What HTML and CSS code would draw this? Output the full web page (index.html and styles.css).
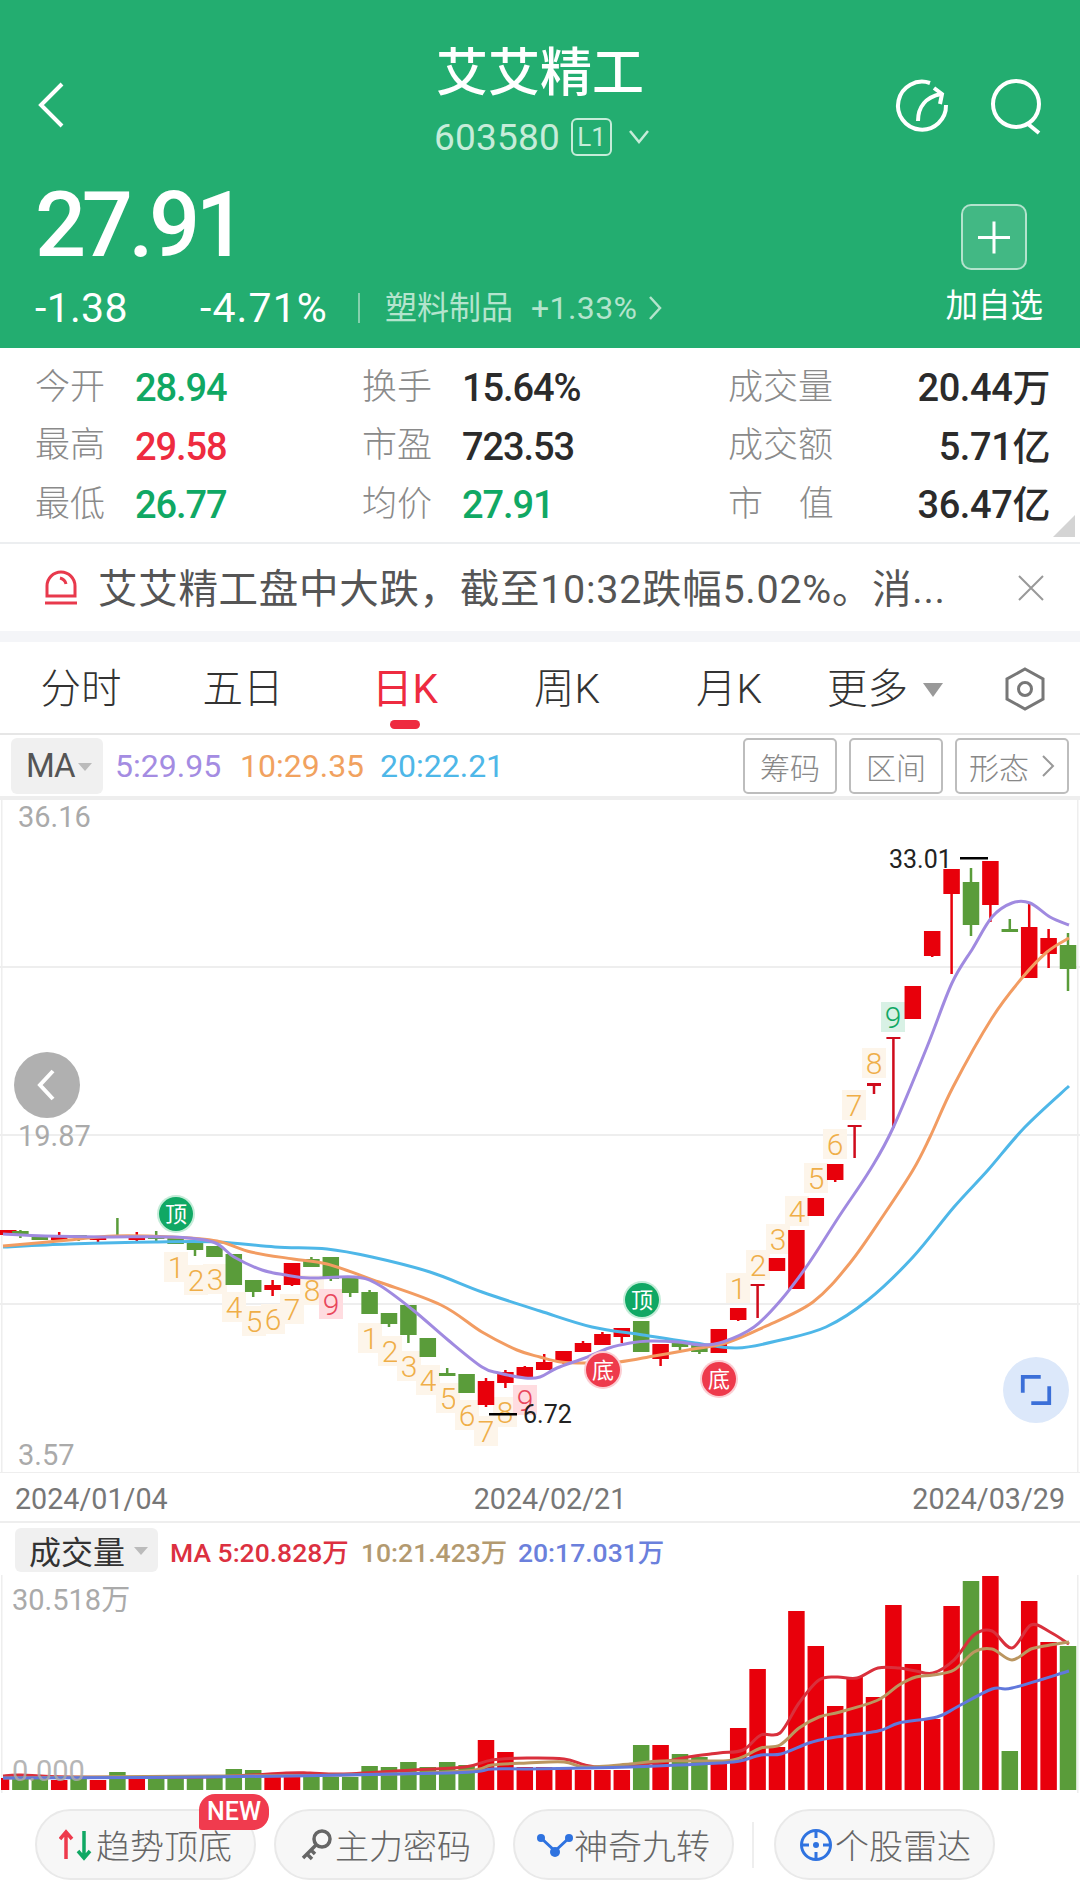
FILE: index.html
```html
<!DOCTYPE html>
<html lang="zh-CN">

<head>
    <meta charset="UTF-8">
    <meta name="viewport" content="width=device-width, initial-scale=1.0">
    <title>艾艾精工</title>
    <link rel="stylesheet" href="styles.css">
</head>

<body>
    <header class="header">
        <div class="nav">
            <svg class="nav-back" width="30" height="48" viewBox="0 0 30 48">
                <path d="M26 3 L5 24 L26 45" />
            </svg>
            <div class="nav-title">
                <h1 class="stock-name">艾艾精工</h1>
                <div class="stock-code">
                    <span>603580</span>
                    <span class="level-tag">L1</span>
                    <svg class="code-caret" width="22" height="16" viewBox="0 0 22 16">
                        <path d="M2 2 L11 13 L20 2" />
                    </svg>
                </div>
            </div>
            <div class="nav-icons">
                <svg width="56" height="56" viewBox="0 0 56 56">
                    <path d="M36 6 A24 24 0 1 0 52 28" />
                    <path d="M24 44 C24 30 32 20 47 17" />
                    <path d="M40 11 L48 17 L46 27" />
                </svg>
                <svg width="56" height="56" viewBox="0 0 56 56">
                    <circle cx="27" cy="27" r="23" />
                    <path d="M39 47 L50 56" />
                </svg>
            </div>
        </div>
        <div class="quote">
            <div>
                <div class="price">27.91</div>
                <div class="change">
                    <span class="change-abs">-1.38</span>
                    <span class="change-pct">-4.71%</span>
                    <span class="sector">
                        <span class="sector-name">塑料制品</span>
                        <span class="sector-pct">+1.33%</span>
                        <svg width="16" height="26" viewBox="0 0 16 26">
                            <path d="M3 2 L13 13 L3 24" />
                        </svg>
                    </span>
                </div>
            </div>
            <div class="watch">
                <div class="watch-box"></div>
                <div class="watch-label">加自选</div>
            </div>
        </div>
    </header>

    <section class="stats">
        <div class="stat-col stat-col-1">
            <div class="stat"><span class="stat-label">今开</span><span class="stat-val green">28.94</span></div>
            <div class="stat"><span class="stat-label">最高</span><span class="stat-val red">29.58</span></div>
            <div class="stat"><span class="stat-label">最低</span><span class="stat-val green">26.77</span></div>
        </div>
        <div class="stat-col stat-col-2">
            <div class="stat"><span class="stat-label">换手</span><span class="stat-val">15.64%</span></div>
            <div class="stat"><span class="stat-label">市盈</span><span class="stat-val">723.53</span></div>
            <div class="stat"><span class="stat-label">均价</span><span class="stat-val green">27.91</span></div>
        </div>
        <div class="stat-col stat-col-3">
            <div class="stat"><span class="stat-label">成交量</span><span class="stat-val">20.44万</span></div>
            <div class="stat"><span class="stat-label">成交额</span><span class="stat-val">5.71亿</span></div>
            <div class="stat"><span class="stat-label">市&emsp;值</span><span class="stat-val">36.47亿</span></div>
        </div>
        <span class="stats-corner"></span>
    </section>

    <section class="alert">
        <svg width="36" height="38" viewBox="0 0 36 38">
            <path class="alert-line" d="M4 27 V17 A14 14 0 0 1 32 17 V27 Z" />
            <path class="alert-line" d="M17 9 A8 8 0 0 1 23 15" />
            <path class="alert-line" d="M2 34 H34" />
        </svg>
        <span class="alert-text">艾艾精工盘中大跌，截至10:32跌幅5.02%。消...</span>
        <svg class="alert-close" width="28" height="28" viewBox="0 0 28 28">
            <path d="M2 2 L26 26 M26 2 L2 26" />
        </svg>
    </section>

    <nav class="tabs">
        <span class="tab">分时</span>
        <span class="tab">五日</span>
        <span class="tab tab-active">日K</span>
        <span class="tab">周K</span>
        <span class="tab">月K</span>
        <span class="tab-more">更多<i class="tab-caret"></i></span>
        <svg class="tab-setting" width="42" height="44" viewBox="0 0 42 44">
            <path d="M21 2 L39 12 V32 L21 42 L3 32 V12 Z" />
            <circle cx="21" cy="22" r="6.5" />
        </svg>
    </nav>

    <div class="ma-bar">
        <span class="ma-chip">MA<i class="chip-caret"></i></span>
        <span class="ma-val ma5">5:29.95</span>
        <span class="ma-val ma10">10:29.35</span>
        <span class="ma-val ma20">20:22.21</span>
        <span class="ma-tools">
            <span class="tool">筹码</span>
            <span class="tool">区间</span>
            <span class="tool tool-wide">形态
                <svg width="14" height="24" viewBox="0 0 14 24">
                    <path d="M2 2 L12 12 L2 22" />
                </svg>
            </span>
        </span>
    </div>

    <div class="kline">
        <svg id="klineSvg" class="chart-svg" width="1080" height="675" viewBox="0 798 1080 675"></svg>
        <span class="round-btn round-left">
            <svg width="24" height="36" viewBox="0 0 24 36">
                <path d="M18 4 L5 18 L18 32" />
            </svg>
        </span>
        <span class="round-btn round-right">
            <svg width="34" height="34" viewBox="0 0 36 36">
                <path d="M4 21 V4 H23 M32 14 V32 H13" />
            </svg>
        </span>
    </div>

    <div class="dates">
        <span>2024/01/04</span>
        <span class="date-mid">2024/02/21</span>
        <span>2024/03/29</span>
    </div>

    <div class="vol-bar">
        <span class="vol-chip">成交量<i class="chip-caret"></i></span>
        <span class="vol-ma5">MA 5:20.828万</span>
        <span class="vol-ma10">10:21.423万</span>
        <span class="vol-ma20">20:17.031万</span>
    </div>
    <svg id="volSvg" class="chart-svg vol-svg" width="1080" height="218" viewBox="0 1575 1080 218"></svg>

    <footer class="footer">
        <span class="pill">
            <svg width="36" height="32" viewBox="0 0 36 32">
                <path class="arrow-up" d="M7 30 V3 M1 10 L7 3 L13 10" />
                <path class="arrow-down" d="M25 2 V29 M19 22 L25 29 L31 22" />
            </svg>
            趋势顶底
            <span class="new-badge">NEW</span>
        </span>
        <span class="pill">
            <svg width="36" height="34" viewBox="0 0 36 34">
                <circle class="key-line" cx="24" cy="11" r="8" />
                <path class="key-line" d="M18 17 L5 30 M9 26 L14 31 M13 22 L17 26" />
            </svg>
            主力密码
        </span>
        <span class="pill">
            <svg width="36" height="26" viewBox="0 0 36 26">
                <path class="zig-line" d="M4 6 L18 19 L32 6" />
                <circle class="zig-dot" cx="4" cy="6" r="4" />
                <circle class="zig-dot" cx="18" cy="20" r="5" />
                <circle class="zig-dot" cx="32" cy="6" r="4" />
            </svg>
            神奇九转
        </span>
        <span class="footer-sep"></span>
        <span class="pill">
            <svg width="36" height="34" viewBox="0 0 36 34">
                <circle class="target-line" cx="18" cy="17" r="14.5" />
                <path class="target-line" d="M18 2 V10 M18 24 V32 M3 17 H11 M25 17 H33" />
                <circle class="target-dot" cx="18" cy="17" r="3" />
            </svg>
            个股雷达
        </span>
    </footer>

    <script src="chart.js"></script>
</body>

</html>
```

FILE: styles.css
```css
* {
    box-sizing: border-box;
}

body {
    margin: 0;
    width: 1080px;
    height: 1889px;
    overflow: hidden;
    background: #fff;
    font-family: Roboto, "Noto Sans CJK SC", sans-serif;
    color: #222;
}

svg {
    display: block;
    flex: none;
}

/* header */
.header {
    height: 348px;
    background: #23ad70;
    color: #fff;
}

.nav {
    height: 165px;
    display: grid;
    grid-template-columns: 1fr auto 1fr;
    padding: 0 34px;
}

.nav-back {
    margin: 81px 0 0 2px;
    fill: none;
    stroke: #fff;
    stroke-width: 4;
}

.nav-title {
    padding-top: 34px;
    text-align: center;
}

.stock-name {
    margin: 0;
    font-size: 52px;
    line-height: 70px;
    font-weight: 500;
    font-family: "Noto Sans CJK SC", sans-serif;
}

.stock-code {
    display: flex;
    align-items: center;
    height: 44px;
    margin: 11px 0 0 4px;
    font-size: 37px;
    letter-spacing: 0.2px;
    color: #c6ecd9;
}

.level-tag {
    width: 41px;
    height: 38px;
    margin-left: 11px;
    border: 2px solid #c6ecd9;
    border-radius: 6px;
    font-size: 26px;
    line-height: 34px;
    letter-spacing: 0;
    text-align: center;
}

.code-caret {
    margin-left: 16px;
    fill: none;
    stroke: #c6ecd9;
    stroke-width: 2.5;
}

.nav-icons {
    display: flex;
    justify-content: flex-end;
    gap: 39px;
    margin: 77px 1px 0 0;
    align-self: start;
}

.nav-icons svg {
    fill: none;
    stroke: #fff;
    stroke-width: 4;
    overflow: visible;
}

.quote {
    display: flex;
    justify-content: space-between;
    padding: 15px 37px 0 35px;
}

.price {
    height: 92px;
    font-size: 90px;
    line-height: 92px;
    font-weight: 500;
    letter-spacing: -4.4px;
}

.change {
    display: flex;
    align-items: center;
    height: 40px;
    margin-top: 16px;
    font-size: 41px;
}

.change-abs {
    width: 165px;
    flex: none;
    letter-spacing: 0.3px;
}

.change-pct {
    width: 158px;
    flex: none;
    letter-spacing: 1.1px;
}

.sector {
    display: flex;
    align-items: center;
    height: 30px;
    padding-left: 25px;
    border-left: 2px solid #85d0ad;
    color: #b4e4cd;
}

.sector-name {
    margin-top: -6px;
    font-size: 32px;
    white-space: nowrap;
}

.sector-pct {
    margin: 0 10px 0 18px;
    font-size: 32px;
    letter-spacing: 0.4px;
}

.sector svg {
    fill: none;
    stroke: #b4e4cd;
    stroke-width: 2.5;
}

.watch {
    display: flex;
    flex-direction: column;
    align-items: center;
    padding-top: 24px;
}

.watch-box {
    position: relative;
    width: 66px;
    height: 66px;
    background: rgba(255, 255, 255, 0.14);
    border: 2px solid rgba(255, 255, 255, 0.6);
    border-radius: 10px;
}

.watch-box::before,
.watch-box::after {
    content: "";
    position: absolute;
    left: 15px;
    top: 30px;
    width: 32px;
    height: 3px;
    background: #fff;
}

.watch-box::after {
    transform: rotate(90deg);
}

.watch-label {
    margin-top: 16px;
    font-size: 32.5px;
    line-height: 40px;
}

/* stats */
.stats {
    position: relative;
    display: flex;
    height: 196px;
    padding: 8px 0 0 35px;
    border-bottom: 2px solid #eceef0;
}

.stat-col-1 {
    width: 327px;
}

.stat-col-2 {
    width: 366px;
}

.stat-col-3 {
    width: 322px;
}

.stat {
    display: flex;
    align-items: center;
    height: 58.5px;
}

.stat-label {
    width: 100px;
    margin-top: -4px;
    font-size: 35px;
    color: #8a8a8a;
    font-weight: 300;
}

.stat-col-3 .stat {
    justify-content: space-between;
}

.stat-col-3 .stat-label {
    width: 110px;
    white-space: nowrap;
}

.stat-val {
    margin-top: 6px;
    font-size: 38px;
    line-height: 44px;
    font-weight: 500;
    letter-spacing: -1.1px;
    color: #2b2b2b;
}

.stat-col-3 .stat-val {
    letter-spacing: -0.4px;
}

.green {
    color: #10a864;
}

.red {
    color: #ee2b40;
}

.stats-corner {
    position: absolute;
    right: 5px;
    bottom: 5px;
    width: 22px;
    height: 22px;
    background: #d4d4d4;
    clip-path: polygon(100% 0, 100% 100%, 0 100%);
}

/* alert */
.alert {
    display: flex;
    align-items: center;
    height: 87px;
    padding: 0 35px 0 43px;
}

.alert-line {
    fill: none;
    stroke: #e8394c;
    stroke-width: 3;
}

.alert-text {
    flex: 1;
    margin: -4px 0 0 19px;
    font-size: 39.5px;
    letter-spacing: 0.7px;
    color: #555;
    white-space: nowrap;
}

.alert-close {
    fill: none;
    stroke: #999;
    stroke-width: 2;
}

/* tabs */
.tabs {
    display: flex;
    align-items: center;
    height: 104px;
    padding-top: 2px;
    border-top: 11px solid #f4f5f8;
    border-bottom: 2px solid #e6e6e6;
}

.tab {
    position: relative;
    width: 162px;
    font-size: 40.5px;
    line-height: 70px;
    text-align: center;
    color: #333;
    font-weight: 300;
}

.tab-active {
    color: #ee2b40;
    font-weight: 400;
}

.tab-active::after {
    content: "";
    position: absolute;
    left: 66px;
    bottom: -5px;
    width: 30px;
    height: 9px;
    background: #ee2b40;
    border-radius: 5px;
}

.tab-more {
    display: flex;
    align-items: center;
    margin-left: 17px;
    font-size: 40.5px;
    line-height: 70px;
    color: #333;
    font-weight: 300;
}

.tab-caret {
    width: 0;
    height: 0;
    margin: 2px 0 0 15px;
    border-left: 10px solid transparent;
    border-right: 10px solid transparent;
    border-top: 14px solid #999;
}

.tab-setting {
    margin-left: 61px;
    fill: none;
    stroke: #777;
    stroke-width: 3;
}

/* MA legend */
.ma-bar {
    display: flex;
    align-items: center;
    height: 63px;
    padding: 0 11px;
    border-bottom: 2px solid #eee;
}

.ma-chip {
    display: flex;
    align-items: center;
    width: 92px;
    height: 56px;
    padding-left: 15px;
    background: #f0f0f0;
    border-radius: 6px;
    font-size: 33px;
    letter-spacing: -1px;
    color: #555;
}

.chip-caret {
    width: 0;
    height: 0;
    margin: 2px 0 0 3px;
    border-left: 7px solid transparent;
    border-right: 7px solid transparent;
    border-top: 8px solid #bbb;
}

.ma-val {
    font-size: 32px;
}

.ma5 {
    width: 125px;
    margin-left: 12px;
    color: #a48ce2;
}

.ma10 {
    width: 140px;
    color: #f1a25f;
}

.ma20 {
    color: #4eb7e8;
}

.ma-tools {
    display: flex;
    gap: 12px;
    margin-left: auto;
}

.tool {
    display: flex;
    align-items: center;
    justify-content: center;
    gap: 12px;
    width: 94px;
    height: 56px;
    border: 2px solid #bdbdbd;
    border-radius: 5px;
    font-size: 30px;
    font-weight: 300;
    color: #888;
}

.tool-wide {
    width: 114px;
}

.tool svg {
    fill: none;
    stroke: #999;
    stroke-width: 2;
}

/* charts */
.kline {
    position: relative;
    height: 675px;
}

.chart-svg text {
    font-family: Roboto, "Noto Sans CJK SC", sans-serif;
}

.round-btn {
    position: absolute;
    display: flex;
    align-items: center;
    justify-content: center;
    width: 66px;
    height: 66px;
    border-radius: 50%;
}

.round-btn svg {
    fill: none;
    stroke-width: 4;
}

.round-left {
    left: 14px;
    top: 254px;
    background: #b0b0b0;
}

.round-left svg {
    stroke: #fff;
}

.round-right {
    left: 1003px;
    top: 559px;
    background: #dce8fa;
}

.round-right svg {
    stroke: #3b6fd8;
}

.dates {
    display: flex;
    justify-content: space-between;
    align-items: center;
    height: 50px;
    padding: 3px 15px 0;
    border-bottom: 2px solid #eee;
    font-size: 28.7px;
    color: #777;
}

.date-mid {
    margin-left: 20px;
}

.vol-bar {
    display: flex;
    align-items: center;
    height: 52px;
    padding-left: 15px;
    padding-top: 2px;
    font-size: 26.5px;
    font-weight: 500;
}

.vol-chip {
    display: flex;
    align-items: center;
    width: 143px;
    height: 44px;
    margin-right: 12px;
    padding-left: 14px;
    background: #f0f0f0;
    border-radius: 6px;
    font-size: 32px;
    font-weight: 400;
    color: #333;
}

.vol-chip .chip-caret {
    margin-left: 9px;
}

.vol-ma5 {
    width: 191px;
    color: #dc3040;
}

.vol-ma10 {
    width: 157px;
    color: #b39a70;
}

.vol-ma20 {
    color: #6b80dc;
}

/* footer */
.footer {
    display: flex;
    align-items: center;
    height: 96px;
    padding: 16px 0 9px 35px;
}

.pill {
    position: relative;
    display: flex;
    align-items: center;
    gap: 1px;
    width: 221px;
    height: 71px;
    margin-right: 18px;
    padding-left: 22px;
    background: #f7f7f7;
    border: 2px solid #e9e9e9;
    border-radius: 36px;
    font-size: 34px;
    font-weight: 300;
    color: #666;
    white-space: nowrap;
}

.footer-sep {
    width: 2px;
    height: 46px;
    margin-right: 20px;
    background: #eee;
}

.new-badge {
    position: absolute;
    left: 162px;
    top: -17px;
    width: 70px;
    height: 36px;
    background: #f03b4e;
    border-radius: 16px 16px 16px 3px;
    font-size: 25px;
    font-weight: 500;
    line-height: 36px;
    text-align: center;
    color: #fff;
}

.arrow-up,
.arrow-down,
.key-line,
.zig-line,
.target-line {
    fill: none;
    stroke-width: 3.5;
}

.arrow-up {
    stroke: #ee3a4c;
}

.arrow-down {
    stroke: #10a864;
}

.key-line {
    stroke: #666;
}

.zig-line,
.target-line {
    stroke: #2f73e0;
    stroke-width: 3;
}

.zig-dot,
.target-dot {
    fill: #2f73e0;
}
```

FILE: chart.js
```js
const RED = '#e8000b';
const GREEN = '#5a9c3a';

// i = candle number, [open/top, bottom, wick top, wick bottom, colour]
const candles = [
    [1230, 1235, 1230, 1235, 'r'], [1231, 1236, 1230, 1238, 'g'], [1235, 1240, 1235, 1240, 'g'],
    [1235, 1240, 1232, 1240, 'r'], [1235, 1238, 1235, 1241, 'g'], [1237, 1240, 1237, 1242, 'r'],
    [1236, 1238, 1218, 1238, 'g'], [1237, 1240, 1232, 1242, 'r'], [1237, 1239, 1231, 1241, 'g'],
    [1236, 1244, 1236, 1244, 'g'], [1243, 1250, 1243, 1256, 'g'], [1246, 1257, 1246, 1257, 'g'],
    [1254, 1285, 1254, 1285, 'g'], [1280, 1292, 1280, 1297, 'g'], [1285, 1290, 1280, 1296, 'r'],
    [1263, 1285, 1263, 1286, 'r'], [1259, 1267, 1257, 1267, 'g'], [1257, 1279, 1257, 1281, 'g'],
    [1278, 1293, 1278, 1297, 'g'], [1292, 1314, 1290, 1314, 'g'], [1313, 1324, 1313, 1327, 'g'],
    [1305, 1335, 1305, 1343, 'g'], [1338, 1357, 1338, 1357, 'g'], [1373, 1376, 1368, 1376, 'g'],
    [1374, 1393, 1374, 1393, 'g'], [1381, 1405, 1378, 1407, 'r'], [1372, 1383, 1370, 1388, 'r'],
    [1367, 1377, 1366, 1377, 'r'], [1362, 1370, 1354, 1370, 'r'], [1351, 1362, 1351, 1364, 'r'],
    [1343, 1352, 1341, 1352, 'r'], [1334, 1345, 1332, 1345, 'r'], [1328, 1337, 1328, 1343, 'r'],
    [1321, 1352, 1321, 1352, 'g'], [1344, 1359, 1344, 1366, 'r'], [1342, 1347, 1342, 1350, 'g'],
    [1345, 1352, 1345, 1354, 'g'], [1329, 1353, 1329, 1353, 'r'], [1308, 1320, 1308, 1321, 'r'],
    [1284, 1286, 1284, 1318, 't'], [1258, 1271, 1258, 1271, 'r'], [1230, 1289, 1230, 1289, 'r'],
    [1198, 1216, 1198, 1216, 'r'], [1164, 1180, 1164, 1182, 'r'], [1125, 1127, 1125, 1158, 't'],
    [1083, 1086, 1083, 1094, 't'], [1037, 1039, 1037, 1128, 't'], [986, 1019, 986, 1019, 'r'],
    [931, 956, 931, 957, 'r'], [869, 894, 869, 974, 'r'], [882, 925, 868, 936, 'g'],
    [861, 905, 861, 922, 'r'], [929, 932, 919, 932, 'g'], [927, 978, 903, 978, 'r'],
    [938, 954, 929, 968, 'r'], [945, 969, 933, 991, 'g']
];

const ma5 = [[3, 1234], [45, 1236], [103, 1237], [172, 1237], [213, 1242], [234, 1257], [262, 1270], [286, 1275], [310, 1278], [355, 1277], [379, 1285], [413, 1310], [448, 1340], [482, 1367], [499, 1373], [525, 1378], [540, 1377], [557, 1368], [585, 1358], [609, 1348], [630, 1343], [650, 1341], [678, 1342], [702, 1345], [723, 1342], [754, 1327], [781, 1300], [809, 1263], [840, 1215], [870, 1170], [893, 1128], [927, 1047], [952, 983], [973, 948], [992, 917], [1012, 903], [1030, 903], [1050, 917], [1069, 925]];
const ma10 = [[3, 1246], [69, 1240], [114, 1236], [172, 1237], [217, 1241], [251, 1252], [293, 1259], [327, 1264], [379, 1282], [441, 1305], [482, 1332], [517, 1350], [540, 1357], [561, 1362], [585, 1363], [619, 1362], [654, 1356], [688, 1350], [726, 1343], [764, 1327], [813, 1302], [850, 1263], [885, 1213], [913, 1170], [930, 1137], [953, 1087], [992, 1018], [1022, 978], [1047, 952], [1069, 938]];
const ma20 = [[3, 1247], [69, 1244], [155, 1242], [217, 1242], [275, 1247], [327, 1249], [372, 1257], [430, 1272], [482, 1292], [540, 1311], [592, 1327], [643, 1335], [695, 1343], [737, 1348], [781, 1340], [826, 1327], [868, 1300], [913, 1257], [954, 1207], [988, 1170], [1025, 1127], [1069, 1086]];

// top of each volume bar
const volumes = [
    [1778, 'r'], [1775, 'g'], [1778, 'g'], [1780, 'r'], [1777, 'g'], [1780, 'r'], [1772, 'g'], [1779, 'r'],
    [1777, 'g'], [1777, 'g'], [1777, 'g'], [1777, 'g'], [1769, 'g'], [1770, 'g'], [1777, 'r'], [1777, 'r'],
    [1777, 'g'], [1777, 'g'], [1777, 'g'], [1766, 'g'], [1767, 'g'], [1762, 'g'], [1767, 'g'], [1762, 'g'],
    [1765, 'g'], [1740, 'r'], [1752, 'r'], [1767, 'r'], [1767, 'r'], [1768, 'r'], [1770, 'r'], [1770, 'r'],
    [1770, 'r'], [1745, 'g'], [1745, 'r'], [1754, 'g'], [1757, 'g'], [1763, 'r'], [1728, 'r'], [1669, 'r'],
    [1747, 'r'], [1611, 'r'], [1646, 'r'], [1706, 'r'], [1677, 'r'], [1697, 'r'], [1605, 'r'], [1664, 'r'],
    [1719, 'r'], [1606, 'r'], [1581, 'g'], [1576, 'r'], [1751, 'g'], [1601, 'r'], [1642, 'r'], [1646, 'g']
];

const volMa5 = [[3, 1776], [21, 1775], [69, 1777], [207, 1777], [286, 1773], [310, 1773], [344, 1774], [413, 1770], [465, 1767], [492, 1760], [527, 1758], [564, 1759], [585, 1765], [602, 1767], [630, 1765], [661, 1762], [688, 1757], [719, 1753], [743, 1750], [761, 1735], [780, 1733], [799, 1703], [819, 1680], [837, 1677], [857, 1678], [878, 1668], [899, 1668], [916, 1671], [933, 1673], [954, 1660], [974, 1635], [992, 1631], [1012, 1648], [1031, 1625], [1050, 1632], [1069, 1644]];
const volMa10 = [[3, 1778], [207, 1776], [344, 1775], [465, 1771], [492, 1765], [527, 1763], [564, 1762], [585, 1767], [630, 1764], [661, 1761], [719, 1761], [740, 1758], [761, 1748], [780, 1745], [799, 1728], [819, 1717], [840, 1712], [878, 1700], [899, 1685], [916, 1677], [933, 1675], [954, 1670], [974, 1652], [992, 1649], [1012, 1660], [1031, 1649], [1050, 1645], [1069, 1642]];
const volMa20 = [[3, 1778], [207, 1777], [448, 1773], [492, 1769], [527, 1769], [585, 1768], [630, 1767], [678, 1765], [719, 1763], [740, 1761], [761, 1755], [781, 1754], [809, 1743], [830, 1738], [878, 1731], [899, 1723], [937, 1717], [957, 1707], [992, 1689], [1012, 1688], [1069, 1671]];

// nine-turn numbers: text, x, y, kind
const nines = [
    ['1', 176, 1267], ['2', 196, 1280], ['3', 215, 1279], ['4', 234, 1307], ['5', 254, 1321], ['6', 273, 1319],
    ['7', 292, 1309], ['8', 312, 1290], ['9', 331, 1304, 'pink'],
    ['1', 370, 1338], ['2', 390, 1351], ['3', 409, 1366], ['4', 428, 1380], ['5', 448, 1398], ['6', 467, 1415],
    ['7', 486, 1431], ['8', 505, 1412], ['9', 525, 1400, 'pink'],
    ['1', 738, 1288], ['2', 758, 1265], ['3', 778, 1239], ['4', 797, 1211], ['5', 816, 1178], ['6', 835, 1144],
    ['7', 854, 1105], ['8', 874, 1063], ['9', 893, 1017, 'mint']
];

const nineColors = {
    pink: ['#ffdce0', '#e8475c'],
    mint: ['#d8f1e5', '#10a864']
};

const signals = [
    ['顶', 176, 1214, '#10a864', '#c4ecd8'],
    ['顶', 642, 1300, '#10a864', '#c4ecd8'],
    ['底', 603, 1370, '#ee3a4c', '#fbcdd2'],
    ['底', 719, 1379, '#ee3a4c', '#fbcdd2']
];

function xOf(i) {
    return 1 + 19.4 * i;
}

// catmull-rom through the points
function smoothPath(pts) {
    let d = 'M' + pts[0][0] + ' ' + pts[0][1];
    for (let i = 0; i < pts.length - 1; i++) {
        const p0 = pts[i - 1] || pts[i];
        const p1 = pts[i];
        const p2 = pts[i + 1];
        const p3 = pts[i + 2] || p2;
        const c1x = p1[0] + (p2[0] - p0[0]) / 6;
        const c1y = p1[1] + (p2[1] - p0[1]) / 6;
        const c2x = p2[0] - (p3[0] - p1[0]) / 6;
        const c2y = p2[1] - (p3[1] - p1[1]) / 6;
        d += ' C' + c1x.toFixed(1) + ' ' + c1y.toFixed(1) + ' ' + c2x.toFixed(1) + ' ' + c2y.toFixed(1) + ' ' + p2[0] + ' ' + p2[1];
    }
    return d;
}

function line(pts, color, width) {
    return '<path d="' + smoothPath(pts) + '" fill="none" stroke="' + color + '" stroke-width="' + width + '"/>';
}

function label(text, x, y, size, color, extra) {
    return '<text x="' + x + '" y="' + y + '" font-size="' + size + '" fill="' + color + '" ' + (extra || '') + '>' + text + '</text>';
}

function drawKline() {
    let s = '';
    [798, 966, 1134, 1303, 1472].forEach(y => {
        s += '<rect x="0" y="' + y + '" width="1080" height="2" fill="#eeeeee"/>';
    });
    s += '<rect x="1" y="798" width="1.5" height="675" fill="#eeeeee"/>';
    s += '<rect x="1077" y="798" width="1.5" height="675" fill="#eeeeee"/>';

    s += label('36.16', 18, 827, 29, '#aaaaaa');
    s += label('19.87', 18, 1146, 29, '#aaaaaa');
    s += label('3.57', 18, 1465, 29, '#aaaaaa');

    nines.forEach(n => {
        const c = nineColors[n[3]] || ['#fdf5ea', '#efae48'];
        s += '<rect x="' + (n[1] - 12) + '" y="' + (n[2] - 15) + '" width="24" height="30" fill="' + c[0] + '"/>';
        s += label(n[0], n[1], n[2] + 11, 30, c[1], 'text-anchor="middle" font-weight="300"');
    });

    candles.forEach((c, i) => {
        const x = xOf(i);
        const color = c[4] === 'g' ? GREEN : (c[4] === 't' ? '#cf0b1c' : RED);
        s += '<rect x="' + (x - 1.25) + '" y="' + c[2] + '" width="2.5" height="' + (c[3] - c[2]) + '" fill="' + color + '"/>';
        const w = c[4] === 't' ? 14 : 16.5;
        s += '<rect x="' + Math.max(x - w / 2, 0) + '" y="' + c[0] + '" width="' + w + '" height="' + (c[1] - c[0]) + '" fill="' + color + '"/>';
    });

    s += line(ma20, '#4eb7e8', 3);
    s += line(ma10, '#f29c62', 3);
    s += line(ma5, '#a08ae0', 3);

    signals.forEach(m => {
        s += '<circle cx="' + m[1] + '" cy="' + m[2] + '" r="19" fill="' + m[4] + '"/>';
        s += '<circle cx="' + m[1] + '" cy="' + m[2] + '" r="17" fill="' + m[3] + '"/>';
        s += label(m[0], m[1], m[2] + 8, 22, '#ffffff', 'text-anchor="middle"');
    });

    // high and low marks
    s += label('33.01', 889, 868, 25, '#222222');
    s += '<rect x="960" y="857" width="28" height="2.5" fill="#000"/>';
    s += '<rect x="489" y="1413" width="28" height="2.5" fill="#000"/>';
    s += label('6.72', 523, 1423, 25, '#222222');

    document.getElementById('klineSvg').innerHTML = s;
}

function drawVolume() {
    let s = '<rect x="1" y="1575" width="1.5" height="218" fill="#eeeeee"/>';
    s += '<rect x="1077" y="1575" width="1.5" height="218" fill="#eeeeee"/>';
    s += label('30.518万', 12, 1610, 29, '#aaaaaa');

    volumes.forEach((v, i) => {
        const x = xOf(i);
        const left = Math.max(x - 8.25, 1);
        const w = x + 8.25 - left;
        s += '<rect x="' + left + '" y="' + v[0] + '" width="' + w + '" height="' + (1790 - v[0]) + '" fill="' + (v[1] === 'g' ? GREEN : RED) + '"/>';
    });

    s += line(volMa5, '#d9303c', 3);
    s += line(volMa10, '#bb9660', 3);
    s += line(volMa20, '#6178dc', 3);
    s += label('0.000', 12, 1781, 29, '#aaaaaa', 'opacity="0.85"');

    document.getElementById('volSvg').innerHTML = s;
}

drawKline();
drawVolume();
```
